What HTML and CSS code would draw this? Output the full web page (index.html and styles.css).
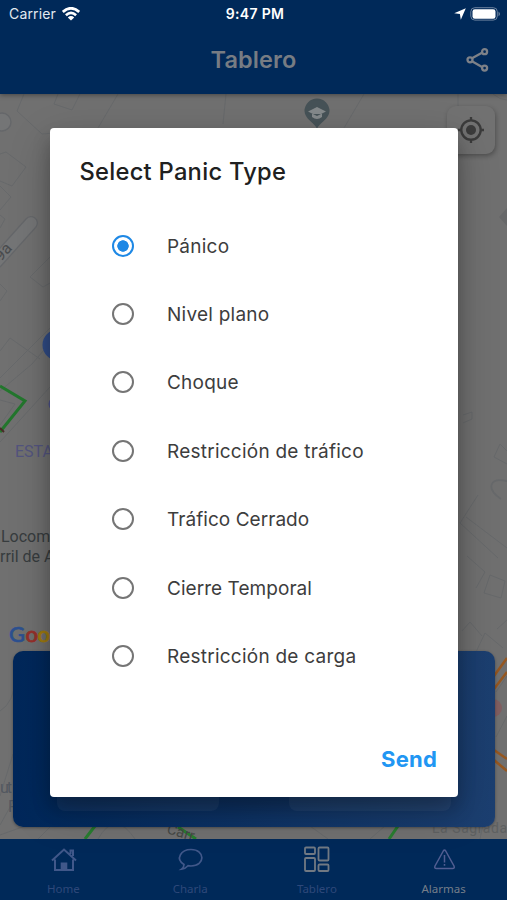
FILE: index.html
```html
<!DOCTYPE html>
<html lang="es">
<head>
<meta charset="utf-8">
<title>Tablero</title>
<link rel="stylesheet" href="styles.css">
</head>
<body>
<div class="app">
  <header class="header">
    <div class="status">
      <div class="status-left"><span class="carrier">Carrier</span>
        <svg width="18" height="14" viewBox="0 0 18 14" fill="none" stroke="#fff" stroke-width="2.7"><path d="M.8 4.9Q9-2.4 17.2 4.9M3.9 8.2Q9 3.7 14.1 8.2"/><path d="M5.8 10.4Q9 7.8 12.2 10.4L9 13.6Z" fill="#fff" stroke="none"/></svg>
      </div>
      <span class="clock">9:47 PM</span>
      <div class="status-right">
        <svg width="12" height="12" viewBox="0 0 12 12"><path d="M11.8.2 6.8 11.8 5.9 6.1.2 5.2Z" fill="#fff"/></svg>
        <svg width="31" height="14" viewBox="0 0 31 14"><rect x=".8" y=".7" width="26.5" height="12.4" rx="4" fill="none" stroke="#6b829e"/><rect x="2.5" y="2.2" width="23" height="9.6" rx="2.3" fill="#fff"/><path d="M28.5 4.5q3 2.4 0 4.8Z" fill="#6b829e"/></svg>
      </div>
    </div>
    <div class="titlebar">
      <h1 class="screen-title">Tablero</h1>
      <svg class="share" width="24" height="26" viewBox="0 0 24 26" fill="none" stroke="#7d8188" stroke-width="2.3"><path d="m6 11.3 10-5.6M6 14.3l10 5.6"/><circle cx="4" cy="12.8" r="2.5"/><circle cx="18.6" cy="4.7" r="2.5"/><circle cx="18.6" cy="21.1" r="2.5"/></svg>
    </div>
  </header>

  <main class="map">
    <svg class="map-art" width="507" height="745" viewBox="0 94 507 745" fill="none">
      <g stroke="#67696b" stroke-width="1">
        <path d="m24 94-7 17 25 23 24-2M58 94l-4 10 18 6 8-16M118 94l-20 34M226 94l-3 30M364 94l-20 34M458 94v13M493 94q7 6 14 6"/>
        <path d="m0 154 6-2 20 15-14 19-12-5M0 186l11 11-11 13M0 215l5 4-5 9"/>
        <path d="M50 257l-20 20 13 10 7-4M0 284l7 7-7 10M0 351l10-13 30 21M0 378l50-50M0 391l32-27 18-21M0 442l50-55M0 400l15 4-15 21"/>
        <path d="m463 415 9-3v7l-9 4M507 451l-7-7-6 13 13 7M478 495l-18 28 38 35M466 517l41 31M467 556l18 16-9 16M490 575l15 6-4 17-17-5ZM462 631l8-9 12 14M476 652l9-19 18 15M507 620l-10 9"/>
        <path d="M507 481c-18-4-21 8-6 18" stroke-width="1.8"/>
        <path d="M0 711q14-8 16-35M0 796l13-42M0 825l14-25M0 835l25-9M38 839l14-14M98 839q17-30 37 0M310 826l18 13M370 839l15-13M492 781l-12 58M496 692l11-16M496 737l11-21"/>
      </g>
      <path d="m507 208-8 9 8 9Z" fill="#676869"/>
      <path d="m-4 262 35-39" stroke="#65676a" stroke-width="14" stroke-linecap="round"/>
      <path d="m-4 262 35-39" stroke="#747576" stroke-width="11.5" stroke-linecap="round"/>
      <circle cx="2" cy="122" r="9" fill="#747576" stroke="#65676a" stroke-width="1.4"/>
      <path d="m0 386 25 15L0 432" stroke="#23762d" stroke-width="3"/>
      <path d="m0 428 4 4" stroke="#4a2b28" stroke-width="2"/>
      <circle cx="58" cy="345" r="15.5" fill="#314c86"/>
      <circle cx="56" cy="404" r="7.5" fill="#4c5089"/>
      <path d="M317 129c-2-6-12.500-10-12.500-18a12.500 12.500 0 0 1 25 0c0 8-10.500 12-12.500 18Z" fill="#465257"/>
      <path d="m308 111.500 9-4.500 9 4.500-9 4.500Zm4 2.500v3q5 4 10 0v-3" fill="#84898b"/>
      <circle cx="493" cy="708" r="9" fill="#805e60"/>
      <g stroke="#955721" stroke-width="2.5"><path d="m494 676 13-18M494 689l13-17M494 750l13 9M494 760l13 11"/></g>
      <path d="m95 826-10 13M398 826l-9 13M178 827l18 12" stroke="#287d30" stroke-width="3"/>
      <g font-family="Roboto, sans-serif">
        <text x="1" y="262" font-size="16" fill="#494b4d" transform="rotate(-48 1 262)">9a</text>
        <text x="15" y="457" font-size="16" fill="#53547e">ESTAC</text>
        <text x="1" y="542" font-size="16" fill="#373c3e">Locomot</text>
        <text x="0" y="562" font-size="16" fill="#373c3e">rril de Ara</text>
        <text x="0" y="793" font-size="16" fill="#535860" textLength="12">ut</text>
        <text x="8" y="812" font-size="16" fill="#535860">P</text>
        <text x="166" y="833" font-size="15" fill="#454845" transform="rotate(17 166 833)">Carr</text>
        <text x="432" y="833" font-size="14" fill="#5e6061" textLength="75">La Sagrada</text>
      </g>
      <g font-family="Lato, sans-serif" font-size="22" font-weight="500">
        <text x="9" y="642" fill="#2c5090" stroke="#2c5090" stroke-width=".6">G</text><text x="25.5" y="642" fill="#96302b" stroke="#96302b" stroke-width=".8">o</text><text x="37.5" y="642" fill="#a07b0e" stroke="#a07b0e" stroke-width=".8">o</text>
      </g>
    </svg>
    <div class="locate">
      <svg width="28" height="28" viewBox="0 0 28 28" fill="none" stroke="#3b3b3b" stroke-width="2.3"><circle cx="14" cy="14" r="9.7"/><circle cx="14" cy="14" r="5" fill="#3b3b3b" stroke="none"/><path d="M14 1v4M14 23v4M1 14h4M23 14h4"/></svg>
    </div>
    <section class="panel"><div class="tile"></div><div class="tile"></div></section>
  </main>

  <nav class="tabs">
    <div class="tab">
      <svg width="28" height="26" viewBox="0 0 28 26" fill="none" stroke="#41588a" stroke-width="2"><path d="m3 13.500 12-11 12 11M6 12.500V23h18V12.500M21.500 7V3.500H24V9"/><path d="M12.700 23v-6.500h4.600V23Z" fill="#41588a"/></svg>
      <span>Home</span>
    </div>
    <div class="tab">
      <svg width="28" height="26" viewBox="0 0 28 26" fill="none" stroke="#41588a" stroke-width="1.7"><path d="M8 17.500C-1 12 5 2.500 15 2.500c14.500 0 14.500 16.500 0 16.500l-3-.3Q9 22 5.500 22.200 8 20.500 8 17.500Z"/></svg>
      <span>Charla</span>
    </div>
    <div class="tab tab-current">
      <svg width="28" height="28" viewBox="0 0 28 28" fill="none" stroke="#717983" stroke-width="1.8"><rect x="2" y="2.500" width="10" height="6.500" rx="1"/><rect x="15.500" y="2.500" width="10" height="13" rx="1"/><rect x="2" y="13" width="10" height="13" rx="1"/><rect x="15.500" y="19.500" width="10" height="6.500" rx="1"/></svg>
      <span>Tablero</span>
    </div>
    <div class="tab tab-light">
      <svg width="28" height="26" viewBox="0 0 28 26" fill="none" stroke="#525e92" stroke-width="1.500"><path d="M13.300 4Q14.500 2 15.700 4L24 19Q25 21.500 22.500 21.500h-16Q4 21.500 5 19ZM14.500 8v7.500M14.500 17v1.800"/></svg>
      <span>Alarmas</span>
    </div>
  </nav>

  <div class="dialog" role="dialog">
    <h2 class="dialog-title">Select Panic Type</h2>
    <div class="options">
      <div class="option"><i class="radio radio-on"></i><span>Pánico</span></div>
      <div class="option"><i class="radio"></i><span>Nivel plano</span></div>
      <div class="option"><i class="radio"></i><span>Choque</span></div>
      <div class="option"><i class="radio"></i><span>Restricción de tráfico</span></div>
      <div class="option"><i class="radio"></i><span class="tight">Tráfico Cerrado</span></div>
      <div class="option"><i class="radio"></i><span class="tight">Cierre Temporal</span></div>
      <div class="option"><i class="radio"></i><span>Restricción de carga</span></div>
    </div>
    <div class="actions"><span class="send">Send</span></div>
  </div>
</div>
</body>
</html>
```
FILE: styles.css
```css
* { box-sizing: border-box; }
body { margin: 0; font-family: Inter, "Liberation Sans", sans-serif; }
svg { display: block; flex: none; }
.app { position: relative; width: 507px; height: 900px; overflow: hidden; display: flex; flex-direction: column; background: #707070; }
.header { position: relative; z-index: 1; height: 94px; flex: none; background: #002959; box-shadow: 0 1px 5px rgba(0,0,0,.4); }
.status { height: 27px; display: grid; grid-template-columns: 1fr auto 1fr; align-items: center; padding: 0 6px 0 9px; color: #fff; }
.status-left { display: flex; align-items: center; gap: 6px; font-size: 14px; color: #e3e9f0; }
.carrier { letter-spacing: .15px; }
.clock { font-size: 14px; font-weight: 600; letter-spacing: .35px; }
.status-right { display: flex; align-items: center; justify-content: flex-end; gap: 4px; }
.titlebar { height: 67px; display: flex; align-items: center; justify-content: center; position: relative; }
.screen-title { margin: -2px 0 0; font-size: 23.5px; line-height: 30px; font-weight: 600; letter-spacing: .1px; color: #777c83; }
.share { position: absolute; right: 17px; top: 20px; }
.map { position: relative; flex: 1; min-height: 0; display: flex; flex-direction: column; justify-content: space-between; padding: 12px 12px 12px 13px; }
.map-art { position: absolute; left: 0; top: 0; }
.locate { position: relative; align-self: flex-end; width: 48px; height: 48px; border-radius: 9px; background: #717171; box-shadow: 1px 2px 5px rgba(0,0,0,.3); display: flex; align-items: center; justify-content: center; }
.panel { position: relative; height: 176px; border-radius: 10px; background: linear-gradient(90deg, #00275a, #1c3f70); display: flex; align-items: flex-end; justify-content: space-between; padding: 0 44px 16px; box-shadow: 0 1px 3px rgba(0,0,0,.35); }
.tile { width: 162px; height: 70px; border-radius: 8px; background: rgba(255,255,255,.05); }
.tabs { height: 61px; flex: none; display: grid; grid-template-columns: repeat(4, 1fr); background: #002959; }
.tab { display: flex; flex-direction: column; align-items: center; justify-content: space-between; padding: 8px 0 5px; color: #2e487a; font-family: "Noto Sans", sans-serif; font-size: 11.5px; line-height: 13px; }
.tab-current { padding-top: 6px; }
.tab-light { color: #757e89; }
.dialog { position: absolute; z-index: 2; left: 50px; top: 128px; width: 408px; height: 669px; border-radius: 4px; background: #fff; display: flex; flex-direction: column; padding: 29px 21px 23px 29.5px; box-shadow: 0 11px 18px rgba(0,0,0,.23), 0 14px 44px rgba(0,0,0,.2); }
.dialog-title { margin: 0; font-size: 23.7px; line-height: 30px; font-weight: 500; letter-spacing: .27px; color: #202020; }
.options { margin-top: 24.4px; padding-left: 32.5px; }
.option { height: 68.4px; display: flex; align-items: center; gap: 33px; color: #3d3d3d; font-size: 19px; letter-spacing: .24px; white-space: nowrap; }
.option span { padding-top: 1px; }
.tight { letter-spacing: .05px; }
.radio { width: 22px; height: 22px; flex: none; border: 2.5px solid #757575; border-radius: 50%; }
.radio-on { border-color: #1e88e5; background: radial-gradient(circle, #1e88e5 0 5.4px, #fff 6px); }
.actions { margin-top: auto; display: flex; justify-content: flex-end; }
.send { color: #2196f3; font-size: 22px; line-height: 30px; font-weight: 700; letter-spacing: .2px; }
```
